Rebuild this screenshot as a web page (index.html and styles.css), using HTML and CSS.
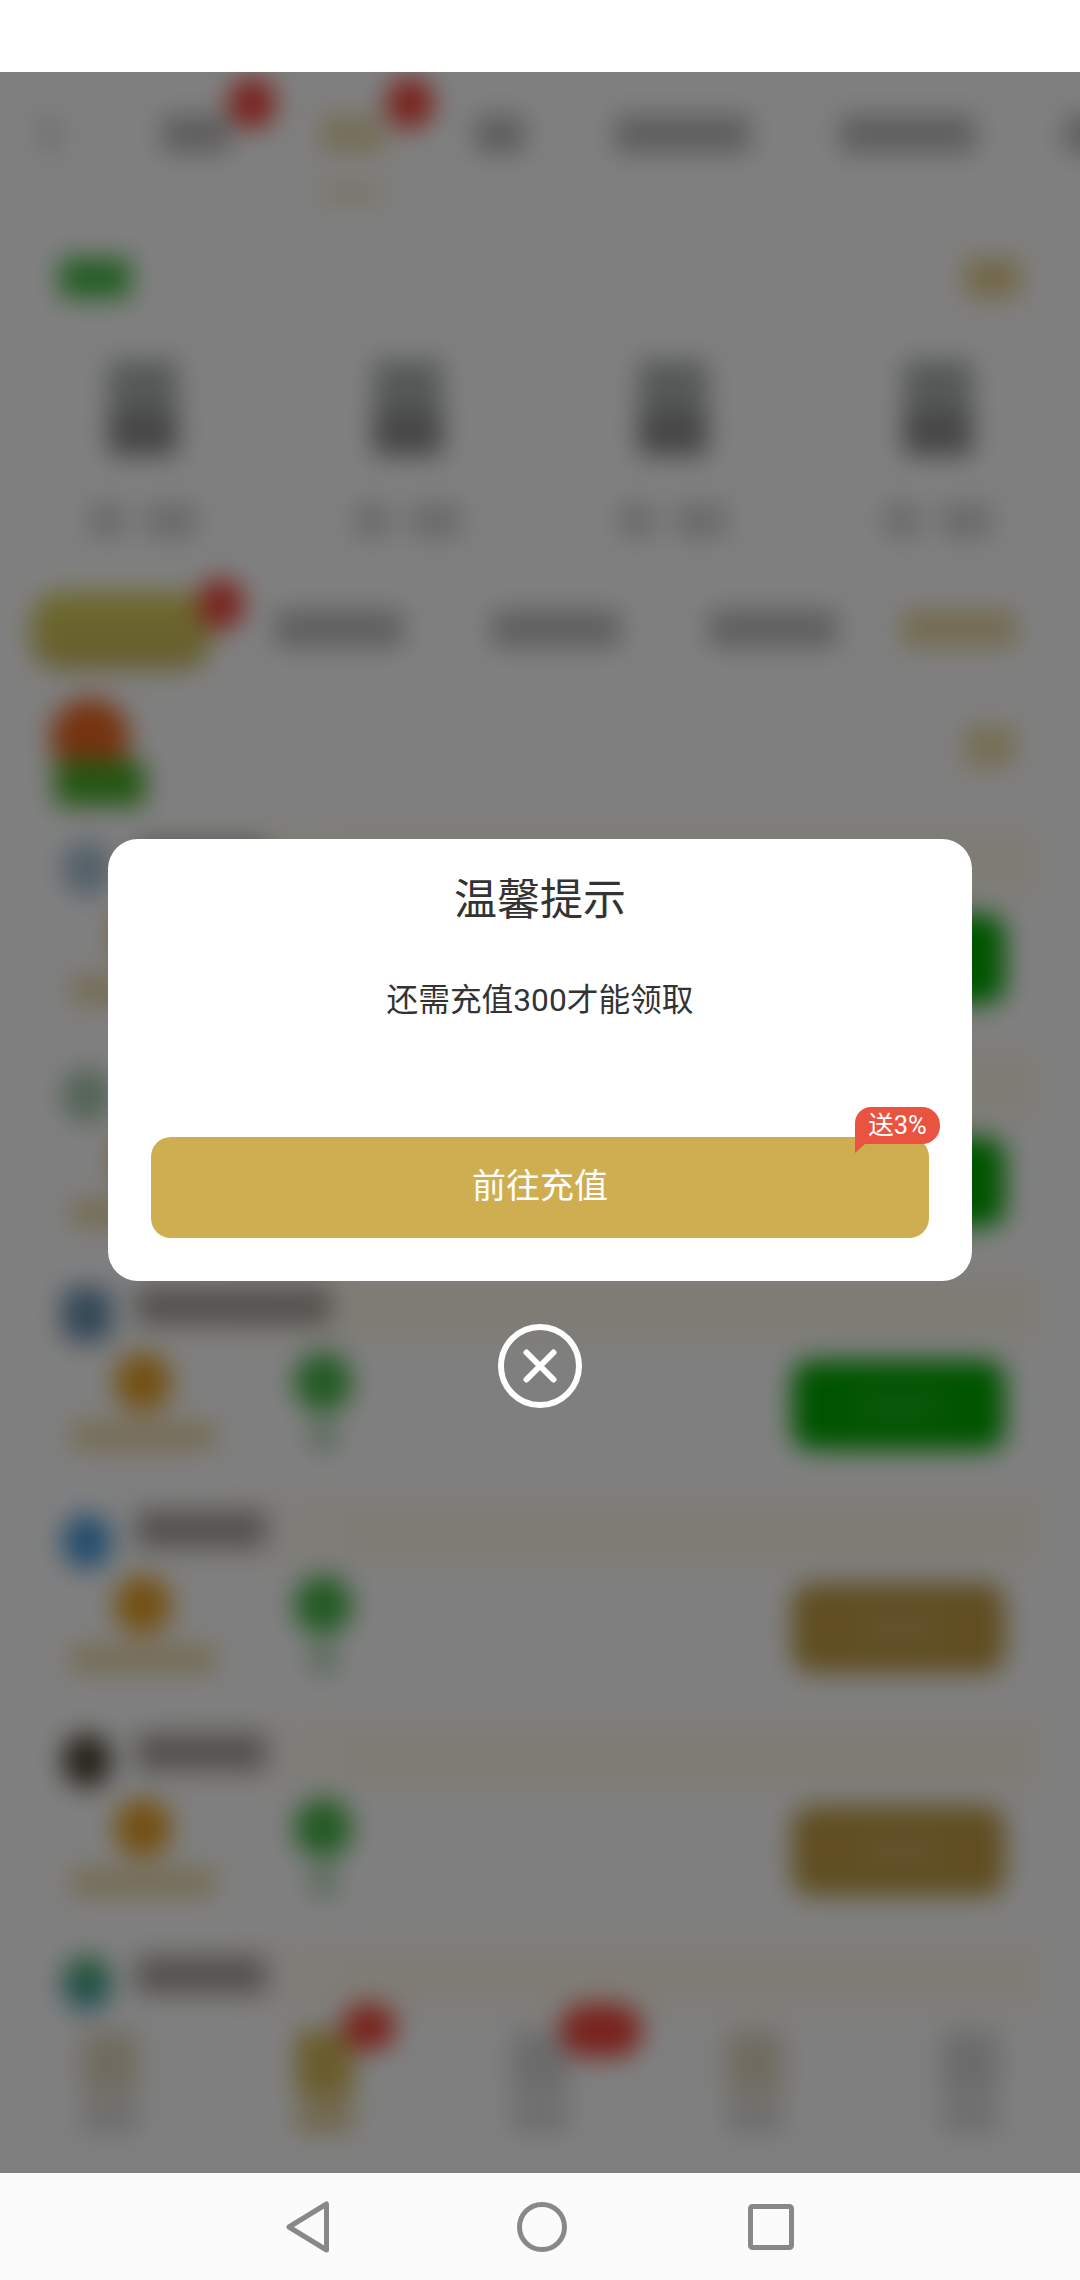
FILE: index.html
```html
<!DOCTYPE html>
<html lang="zh-CN">
<head>
<meta charset="utf-8">
<title>温馨提示</title>
<link rel="stylesheet" href="styles.css">
</head>
<body>
<div class="screen">
  <div class="statusbar"></div>
  <main class="stage">
    <div class="page" aria-hidden="true">
      <div class="tabs">
        <div class="chevron"></div>
        <div class="tab w68"><i class="ink"></i><b class="dot"></b></div>
        <div class="tab w65"><i class="ink gold"></i><b class="dot"></b><s class="rule"></s></div>
        <div class="tab w50"><i class="ink"></i></div>
        <div class="tab w135"><i class="ink"></i></div>
        <div class="tab w135"><i class="ink"></i></div>
        <div class="tab w135"><i class="ink"></i></div>
      </div>
      <div class="section-head"><i class="sh-green"></i><i class="sh-gold"></i></div>
      <div class="steps">
        <div class="step"><i class="step-icon"></i><div class="step-label"><i></i><i></i></div></div>
        <div class="step"><i class="step-icon"></i><div class="step-label"><i></i><i></i></div></div>
        <div class="step"><i class="step-icon"></i><div class="step-label"><i></i><i></i></div></div>
        <div class="step"><i class="step-icon"></i><div class="step-label"><i></i><i></i></div></div>
      </div>
      <div class="pills">
        <div class="pill"><b class="pill-dot"></b></div>
        <i class="pill-text"></i><i class="pill-text"></i><i class="pill-text"></i>
        <i class="pill-more"></i>
      </div>
      <div class="feature">
        <div class="avatar"><i class="avatar-tag"></i></div>
        <i class="feature-more"></i>
      </div>
      <div class="list">
        <section class="row">
          <div class="row-head"><i class="row-icon ic-a"></i><i class="row-title"></i></div>
          <div class="row-body">
            <div class="reward"><i class="coin"></i><i class="coin-label"></i></div>
            <div class="reward-alt"><i class="gem"></i><i class="gem-label"></i></div>
            <div class="action green"><i></i></div>
          </div>
        </section>
        <section class="row">
          <div class="row-head"><i class="row-icon ic-b"></i><i class="row-title"></i></div>
          <div class="row-body">
            <div class="reward"><i class="coin"></i><i class="coin-label"></i></div>
            <div class="reward-alt"><i class="gem"></i><i class="gem-label"></i></div>
            <div class="action green"><i></i></div>
          </div>
        </section>
        <section class="row">
          <div class="row-head"><i class="row-icon ic-c"></i><i class="row-title long"></i></div>
          <div class="row-body">
            <div class="reward"><i class="coin"></i><i class="coin-label"></i></div>
            <div class="reward-alt"><i class="gem"></i><i class="gem-label"></i></div>
            <div class="action green"><i></i></div>
          </div>
        </section>
        <section class="row">
          <div class="row-head"><i class="row-icon ic-d"></i><i class="row-title"></i></div>
          <div class="row-body">
            <div class="reward"><i class="coin"></i><i class="coin-label"></i></div>
            <div class="reward-alt"><i class="gem"></i><i class="gem-label"></i></div>
            <div class="action amber"><i></i></div>
          </div>
        </section>
        <section class="row">
          <div class="row-head"><i class="row-icon ic-e"></i><i class="row-title"></i></div>
          <div class="row-body">
            <div class="reward"><i class="coin"></i><i class="coin-label"></i></div>
            <div class="reward-alt"><i class="gem"></i><i class="gem-label"></i></div>
            <div class="action amber"><i></i></div>
          </div>
        </section>
        <section class="row">
          <div class="row-head"><i class="row-icon ic-f"></i><i class="row-title"></i></div>
        </section>
      </div>
      <nav class="tabbar">
        <div class="bar-item"><i class="bar-icon tint"></i><i class="bar-label"></i></div>
        <div class="bar-item"><i class="bar-icon active"></i><i class="bar-label active"></i><b class="bar-dot"></b></div>
        <div class="bar-item"><i class="bar-icon"></i><i class="bar-label"></i><b class="bar-pill"></b></div>
        <div class="bar-item"><i class="bar-icon tint"></i><i class="bar-label"></i></div>
        <div class="bar-item"><i class="bar-icon"></i><i class="bar-label"></i></div>
      </nav>
    </div>
    <div class="scrim">
      <div class="dialog">
        <h1 class="dialog-title">温馨提示</h1>
        <p class="dialog-text">还需充值300才能领取</p>
        <div class="dialog-button">
          前往充值
          <span class="bonus">送3%</span>
        </div>
      </div>
      <svg class="close" viewBox="0 0 84 84" width="84" height="84">
        <circle cx="42" cy="42" r="39" fill="none" stroke="#fff" stroke-width="6"/>
        <path d="M28.5 28.5 L55.5 55.5 M55.5 28.5 L28.5 55.5" fill="none" stroke="#fff" stroke-width="6" stroke-linecap="round"/>
      </svg>
    </div>
  </main>
  <footer class="navbar">
    <svg class="nav-icon nav-back" viewBox="0 0 44 52" width="44" height="52">
      <path d="M40.5 3 V49 L3 26 Z" fill="none" stroke="#888" stroke-width="5" stroke-linejoin="round"/>
    </svg>
    <svg class="nav-icon" viewBox="0 0 50 50" width="50" height="50">
      <circle cx="25" cy="25" r="22.5" fill="none" stroke="#888" stroke-width="5"/>
    </svg>
    <svg class="nav-icon" viewBox="0 0 46 46" width="46" height="46">
      <rect x="2.5" y="2.5" width="41" height="41" rx="2" fill="none" stroke="#888" stroke-width="5"/>
    </svg>
  </footer>
</div>
</body>
</html>
```
FILE: styles.css
```css
* { box-sizing: border-box; }
html, body { margin: 0; padding: 0; background: #fff; }
body { font-family: Roboto, "Noto Sans CJK SC", sans-serif; }
i, b, s { display: block; }

.screen { width: 1080px; height: 2280px; display: flex; flex-direction: column; overflow: hidden; }
.statusbar { height: 72px; background: #fff; flex: none; }
.stage { flex: 1; position: relative; overflow: hidden; background: #fff; }
.navbar { height: 107px; flex: none; background: #fbfbfb; display: flex; align-items: center; justify-content: center; gap: 181px; }
.nav-icon { display: block; }
.nav-back { margin-right: 6px; }

/* blurred page behind the dialog */
.page { height: 100%; display: flex; flex-direction: column; filter: blur(13px); background: #fff; }

.tabs { height: 142px; flex: none; display: flex; gap: 90px; padding: 43px 0 0 40px; }
.chevron { width: 20px; height: 38px; margin-right: 12px; background: #e0e0e0; flex: none; }
.tab { position: relative; flex: none; }
.w68 { width: 68px; } .w65 { width: 65px; } .w50 { width: 50px; } .w135 { width: 135px; }
.ink { height: 38px; background: #bcbcbc; }
.ink.gold { background: #eadcae; }
.dot { position: absolute; left: 66px; top: -38px; width: 48px; height: 52px; border-radius: 50%; background: #f2453a; }
.rule { width: 60px; height: 14px; margin-top: 33px; background: #ecdfb6; }

.section-head { flex: none; display: flex; justify-content: space-between; padding: 44px 60px 0; }
.sh-green { width: 70px; height: 40px; background: #46ba46; }
.sh-gold { width: 55px; height: 40px; background: #e6cf90; }

.steps { flex: none; display: grid; grid-template-columns: repeat(4, 1fr); padding: 62px 10px 0; }
.step { display: flex; flex-direction: column; align-items: center; gap: 47px; }
.step-icon { width: 70px; height: 96px; border-radius: 6px; background: linear-gradient(#aeb2b2 0%, #aeb2b2 45%, #8e8e8e 60%, #8e8e8e 100%); }
.step-label { display: flex; gap: 22px; height: 35px; }
.step-label i { height: 35px; background: #d4d4d4; }
.step-label i:first-child { width: 34px; }
.step-label i:last-child { width: 50px; }

.pills { flex: none; display: flex; align-items: center; gap: 89px; padding: 54px 0 0 31px; }
.pill { position: relative; width: 180px; height: 78px; border-radius: 30px; margin-right: -25px; background: linear-gradient(#dcd458, #ccb860); }
.pill-dot { position: absolute; left: 167px; top: -14px; width: 46px; height: 52px; border-radius: 50%; background: #f2453a; }
.pill-text { width: 128px; height: 37px; margin-top: -6px; background: #bebebe; }
.pill-more { width: 114px; height: 37px; margin-top: -6px; margin-left: -24px; background: #e8d6a0; }

.feature { flex: none; height: 157px; display: flex; justify-content: space-between; align-items: flex-start; padding: 28px 65px 0 50px; }
.avatar { position: relative; width: 80px; height: 80px; border-radius: 50%; background: #ec6620; }
.avatar-tag { position: absolute; left: 5px; top: 62px; width: 90px; height: 46px; border-radius: 8px; background: #4aac28; }
.feature-more { width: 50px; height: 43px; margin-top: 27px; background: #ecdca8; }

.list { flex: 1; min-height: 0; overflow: hidden; }
.row { height: 223px; }
.row-head { height: 70px; margin: 0 40px; padding-left: 22px; display: flex; align-items: center; gap: 24px; background: linear-gradient(90deg, #fff 10%, #fff9ec 32%, #fff9ec 100%); }
.row-icon { width: 50px; height: 55px; border-radius: 50%; margin-top: 20px; flex: none; }
.ic-a { background: #a6c0d2; margin-top: 12px; }
.ic-b { background: #a6c8ac; }
.ic-c { background: #6a90ae; margin-top: 12px; border-radius: 14px; }
.ic-d { background: #489adb; }
.ic-e { background: #4c4836; margin-top: 12px; }
.ic-f { background: linear-gradient(#4cb058, #4898c0); margin-top: 12px; }
.row-title { width: 130px; height: 38px; margin-top: -4px; background: #a8a49c; }
.row-title.long { width: 195px; }

.row-body { display: flex; align-items: flex-start; padding: 9px 75px 0 71px; }
.reward { width: 144px; display: flex; flex-direction: column; align-items: center; gap: 10px; }
.coin { width: 58px; height: 60px; border-radius: 50%; background: #e8a228; }
.coin-label { width: 144px; height: 28px; background: #ecd8a8; }
.reward-alt { width: 60px; margin-left: 78px; display: flex; flex-direction: column; align-items: center; gap: 10px; }
.gem { width: 58px; height: 60px; border-radius: 50%; background: #48b448; }
.gem-label { width: 26px; height: 28px; background: #b0d4b0; }
.action { margin-left: auto; margin-top: 8px; width: 213px; height: 90px; border-radius: 20px; display: flex; align-items: center; justify-content: center; }
.action i { width: 80px; height: 30px; background: rgba(255,255,255,.1); }
.action.green { background: #00a800; }
.action.amber { background: #c09c44; }

.tabbar { flex: none; height: 163px; background: #fff; display: grid; grid-template-columns: repeat(5, 1fr); padding: 20px 2px 0; position: relative; }
.bar-item { position: relative; display: flex; flex-direction: column; align-items: center; gap: 6px; }
.bar-icon { width: 58px; height: 68px; background: #d8d8d8; border-radius: 8px; }
.bar-icon.tint { background: #e0d8c0; }
.bar-icon.active { background: #d4b858; }
.bar-label { width: 56px; height: 28px; background: #d8d8d8; }
.bar-label.active { background: #e0cc94; }
.bar-dot { position: absolute; left: 125px; top: -27px; width: 54px; height: 48px; border-radius: 50%; background: #f2453a; }
.bar-pill { position: absolute; left: 128px; top: -26px; width: 82px; height: 53px; border-radius: 26px; background: #f2453a; }

/* dialog */
.scrim { position: absolute; inset: 0; background: rgba(0,0,0,.5); display: flex; flex-direction: column; align-items: center; justify-content: center; padding-top: 2px; }
.dialog { width: 864px; background: #fff; border-radius: 30px; padding: 31px 43px 43px; text-align: center; color: #333; }
.dialog-title { margin: 0; font-size: 43px; line-height: 60px; font-weight: 400; }
.dialog-text { margin: 49px 0 0; font-size: 31.7px; line-height: 44px; }
.dialog-button { position: relative; margin-top: 114px; height: 101px; border-radius: 20px; background: #cfae52; color: #fff; font-size: 34px; line-height: 98px; }
.bonus { position: absolute; right: -11px; top: -30px; width: 85px; height: 37px; border-radius: 16px 18px 18px 0; background: #e9533f; color: #fff; font-size: 25.5px; line-height: 36px; text-align: center; }
.bonus::after { content: ""; position: absolute; left: 0; top: 37px; width: 0; height: 0; border-top: 9px solid #e9533f; border-right: 10px solid transparent; }
.close { display: block; margin-top: 43px; flex: none; }
```
